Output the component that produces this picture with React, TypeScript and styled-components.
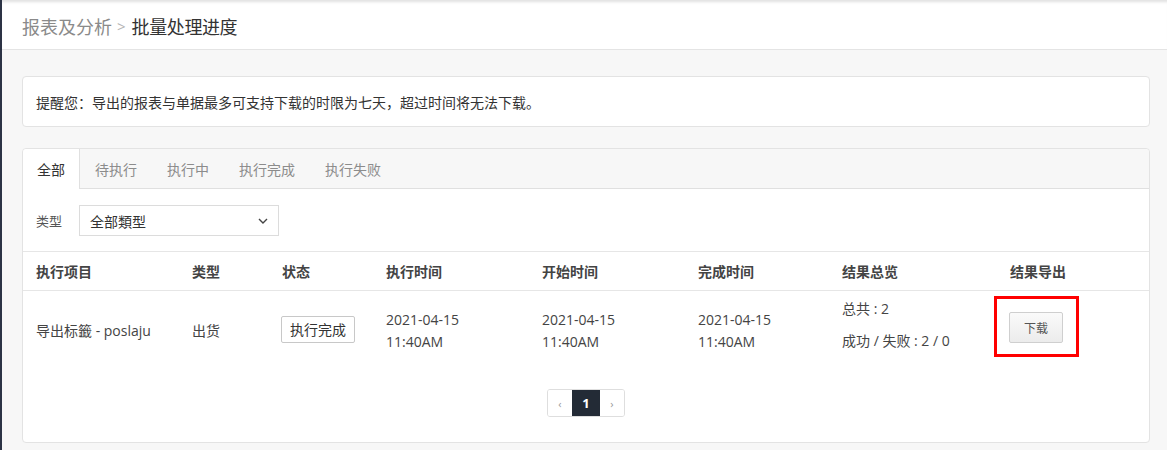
import React from "react";
import styled, { createGlobalStyle } from "styled-components";

const GlobalStyle = createGlobalStyle`
  html, body {
    margin: 0;
    padding: 0;
    background: #f7f7f7;
    font-family: "Open Sans", "Noto Sans CJK SC", sans-serif;
    color: #333;
  }
`;

const Page = styled.div`
  width: 1167px;
  height: 450px;
  box-sizing: border-box;
  border-left: 2px solid #2c3345;
  background: #f7f7f7;
  overflow: hidden;
`;

const Header = styled.div`
  height: 50px;
  box-sizing: border-box;
  background: #fff;
  border-bottom: 1px solid #e4e4e4;
  box-shadow: inset 0 4px 3px -2px rgba(0, 0, 0, 0.12);
  display: flex;
  align-items: center;
  padding: 2px 0 0 20px;
  font-size: 18px;
`;

const Crumb = styled.span`
  color: #8a8a8a;
`;

const Sep = styled.span`
  color: #b5b5b5;
  font-size: 15px;
  margin: 0 6px 0 5px;
`;

const Current = styled.span`
  color: #333;
  letter-spacing: -0.4px;
`;

const Main = styled.div`
  padding: 26px 17px 0 20px;
  display: flex;
  flex-direction: column;
  gap: 21px;
`;

const Card = styled.div`
  background: #fff;
  border: 1px solid #e3e3e3;
  border-radius: 4px;
  box-sizing: border-box;
`;

const Notice = styled(Card)`
  height: 51px;
  display: flex;
  align-items: center;
  padding: 0 13px;
  font-size: 14px;
  color: #333;
`;

const TabBar = styled.div`
  display: flex;
  height: 40px;
  box-sizing: border-box;
  background: #f7f7f7;
  border-bottom: 1px solid #e0e0e0;
  border-radius: 4px 4px 0 0;
`;

const Tab = styled.div<{ $active?: boolean }>`
  padding: 0 14px;
  display: flex;
  align-items: center;
  font-size: 14px;
  color: ${(p) => (p.$active ? "#333" : "#8c8c8c")};
  background: ${(p) => (p.$active ? "#fff" : "transparent")};
  border-right: ${(p) => (p.$active ? "1px solid #e0e0e0" : "none")};
  margin-bottom: ${(p) => (p.$active ? "-1px" : "0")};
  border-top-left-radius: ${(p) => (p.$active ? "4px" : "0")};
  & + & {
    padding: 0 15px 0 15px;
  }
`;

const FilterRow = styled.div`
  display: flex;
  align-items: center;
  gap: 17px;
  padding: 16px 13px 15px;
  border-bottom: 1px solid #e6e6e6;
`;

const Label = styled.span`
  font-size: 13px;
  color: #555;
`;

const Select = styled.div`
  width: 200px;
  height: 31px;
  box-sizing: border-box;
  border: 1px solid #dcdcdc;
  display: flex;
  align-items: center;
  justify-content: space-between;
  padding: 0 9px 0 10px;
  font-size: 14px;
  color: #333;
`;

const cols = "156px 90px 104px 156px 156px 144px 168px 1fr";

const HeadRow = styled.div`
  display: grid;
  grid-template-columns: ${cols};
  height: 38px;
  align-items: center;
  border-bottom: 1px solid #e6e6e6;
  font-size: 14px;
  font-weight: 700;
  color: #444;
`;

const HeadCell = styled.div`
  padding-left: 13px;
`;

const BodyRow = styled.div`
  display: grid;
  grid-template-columns: ${cols};
  height: 80px;
  align-items: center;
  font-size: 14px;
  color: #444;
`;

const Cell = styled.div`
  padding-left: 13px;
  line-height: 22px;
`;

const Summary = styled.div`
  padding-left: 13px;
  display: flex;
  flex-direction: column;
  gap: 10px;
  line-height: 22px;
  margin-top: -12px;
`;

const Status = styled.span`
  display: inline-block;
  border: 1px solid #c8c8c8;
  border-radius: 2px;
  padding: 0 8px;
  line-height: 25px;
  font-size: 14px;
  color: #333;
  margin: -4px 0 0 -1px;
  vertical-align: top;
`;

const Highlight = styled.div`
  display: inline-block;
  border: 3px solid #f00;
  padding: 13px 13px 11px 12px;
  margin-left: -16px;
  margin-top: -9px;
  vertical-align: top;
`;

const DownloadButton = styled.button`
  width: 54px;
  height: 31px;
  border: 1px solid #cfcfcf;
  border-radius: 2px;
  background: linear-gradient(#fafafa, #ececec);
  font-family: inherit;
  font-size: 12px;
  color: #555;
  display: block;
`;

const PagerWrap = styled.div`
  display: flex;
  justify-content: center;
  padding: 18px 0 25px;
`;

const Pager = styled.div`
  display: flex;
  border: 1px solid #dedede;
  border-radius: 3px;
  height: 28px;
  box-sizing: border-box;
  overflow: hidden;
`;

const PageBtn = styled.div<{ $active?: boolean }>`
  width: ${(p) => (p.$active ? "28px" : "24px")};
  display: flex;
  align-items: center;
  justify-content: center;
  font-size: ${(p) => (p.$active ? "13px" : "11px")};
  font-weight: ${(p) => (p.$active ? 700 : 400)};
  color: ${(p) => (p.$active ? "#fff" : "#999")};
  background: ${(p) => (p.$active ? "#232b36" : "#fff")};
`;

const Chevron = () => (
  <svg width="12" height="12" viewBox="0 0 12 12">
    <path d="M2 4l4 4 4-4" fill="none" stroke="#444" strokeWidth="1.4" />
  </svg>
);

const headers = ["执行项目", "类型", "状态", "执行时间", "开始时间", "完成时间", "结果总览", "结果导出"];
const tabs = ["全部", "待执行", "执行中", "执行完成", "执行失败"];

export default function App() {
  return (
    <Page>
      <GlobalStyle />
      <Header>
        <Crumb>报表及分析</Crumb>
        <Sep>&gt;</Sep>
        <Current>批量处理进度</Current>
      </Header>
      <Main>
        <Notice>提醒您：导出的报表与单据最多可支持下载的时限为七天，超过时间将无法下载。</Notice>
        <Card>
          <TabBar>
            {tabs.map((t, i) => (
              <Tab key={t} $active={i === 0}>
                {t}
              </Tab>
            ))}
          </TabBar>
          <FilterRow>
            <Label>类型</Label>
            <Select>
              <span>全部類型</span>
              <Chevron />
            </Select>
          </FilterRow>
          <HeadRow>
            {headers.map((h) => (
              <HeadCell key={h}>{h}</HeadCell>
            ))}
          </HeadRow>
          <BodyRow>
            <Cell>导出标籤 - poslaju</Cell>
            <Cell>出货</Cell>
            <Cell>
              <Status>执行完成</Status>
            </Cell>
            <Cell>
              2021-04-15
              <br />
              11:40AM
            </Cell>
            <Cell>
              2021-04-15
              <br />
              11:40AM
            </Cell>
            <Cell>
              2021-04-15
              <br />
              11:40AM
            </Cell>
            <Summary>
              <span>总共 : 2</span>
              <span>成功 / 失败 : 2 / 0</span>
            </Summary>
            <Cell>
              <Highlight>
                <DownloadButton>下载</DownloadButton>
              </Highlight>
            </Cell>
          </BodyRow>
          <PagerWrap>
            <Pager>
              <PageBtn>‹</PageBtn>
              <PageBtn $active>1</PageBtn>
              <PageBtn>›</PageBtn>
            </Pager>
          </PagerWrap>
        </Card>
      </Main>
    </Page>
  );
}
